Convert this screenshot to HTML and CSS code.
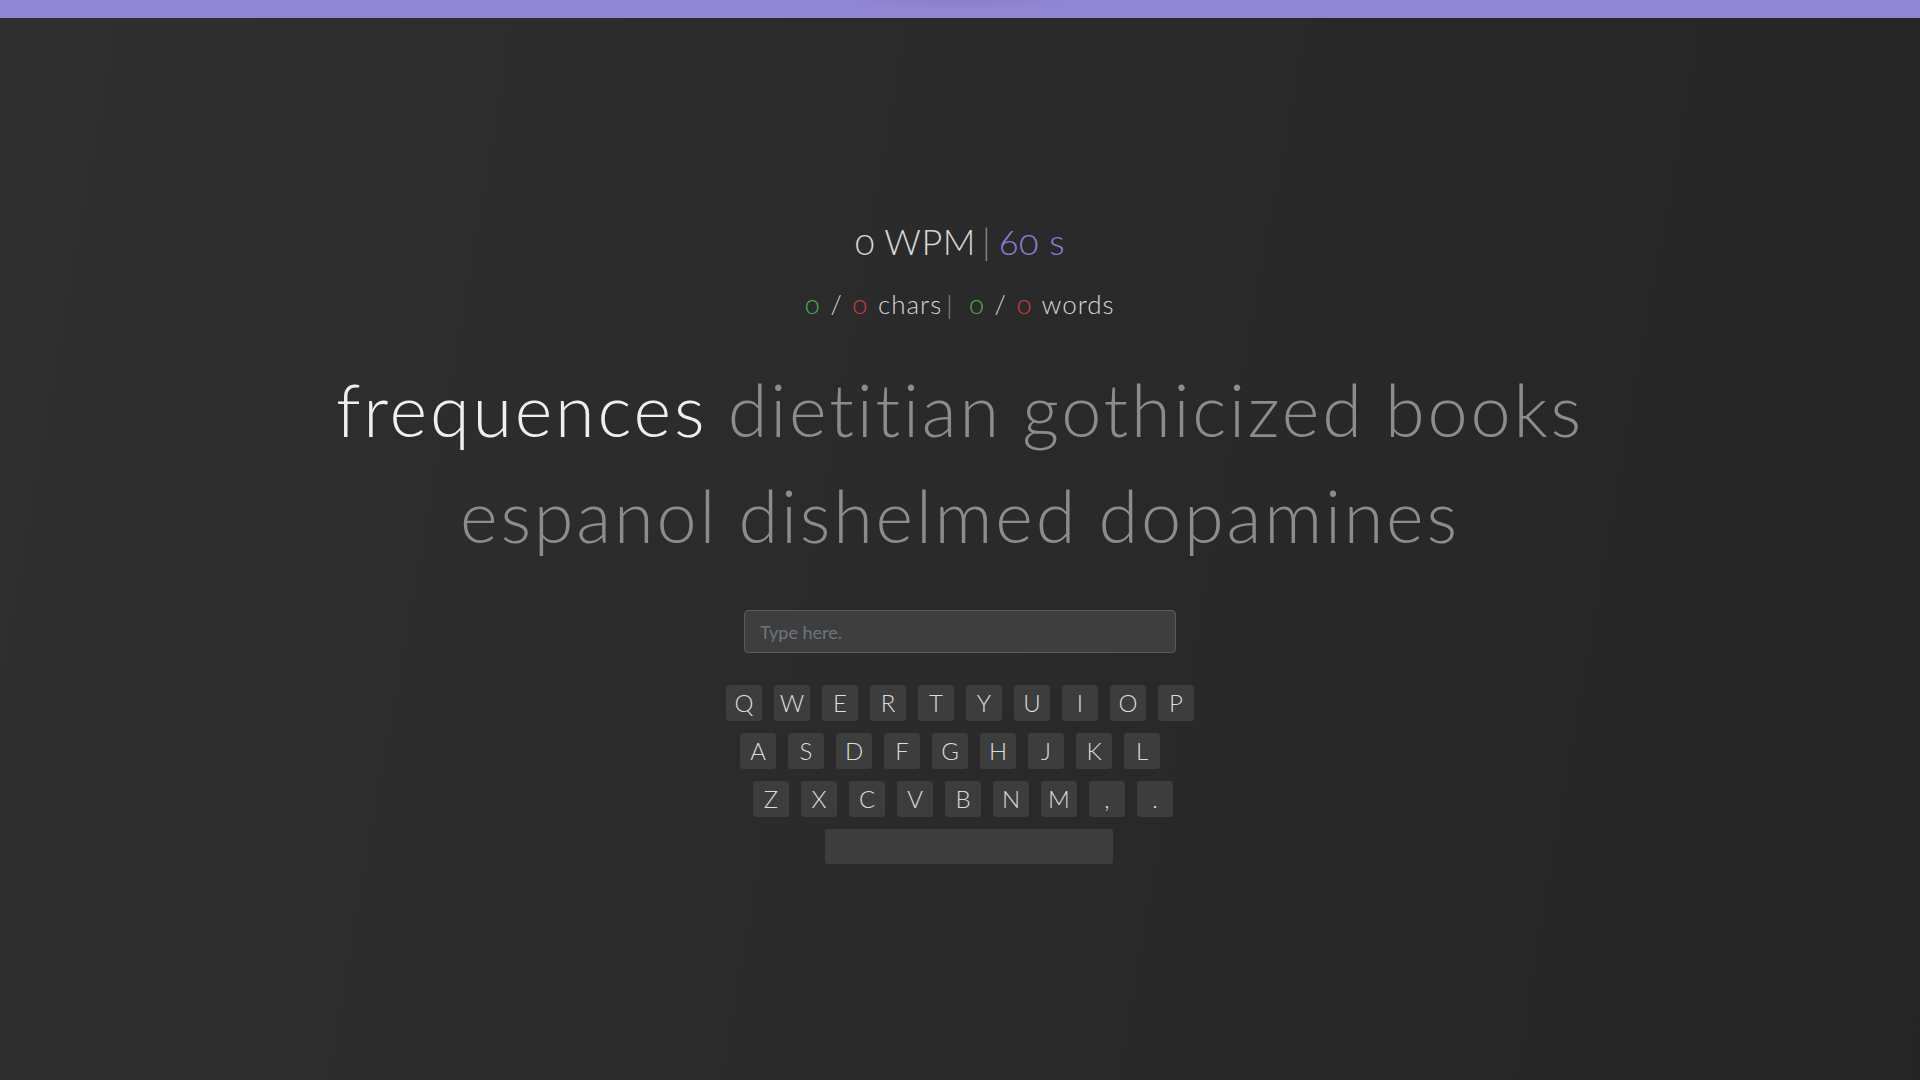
FILE: index.html
```html
<!DOCTYPE html>
<html lang="en">
<head>
<meta charset="utf-8">
<title>Typing Test</title>
<link rel="stylesheet" href="styles.css">
</head>
<body>
<div class="topbar"></div>
<main class="app">
  <div class="speed"><span class="light">0 WPM</span><span class="sep">|</span><span class="time">60 s</span></div>
  <div class="stats">
    <span class="ok">0</span> <span class="light">/</span> <span class="bad">0</span> <span class="light">chars</span><span class="sep small">|</span>
    <span class="ok">0</span> <span class="light">/</span> <span class="bad">0</span> <span class="light">words</span>
  </div>
  <div class="words">
    <div class="line"><span class="current">frequences</span> dietitian gothicized books</div>
    <div class="line">espanol dishelmed dopamines</div>
  </div>
  <input class="typebox" type="text" placeholder="Type here.">
  <div class="keyboard">
    <div class="row">
      <span class="key">Q</span><span class="key">W</span><span class="key">E</span><span class="key">R</span><span class="key">T</span><span class="key">Y</span><span class="key">U</span><span class="key">I</span><span class="key">O</span><span class="key">P</span>
    </div>
    <div class="row row2">
      <span class="key">A</span><span class="key">S</span><span class="key">D</span><span class="key">F</span><span class="key">G</span><span class="key">H</span><span class="key">J</span><span class="key">K</span><span class="key">L</span>
    </div>
    <div class="row row3">
      <span class="key">Z</span><span class="key">X</span><span class="key">C</span><span class="key">V</span><span class="key">B</span><span class="key">N</span><span class="key">M</span><span class="key">,</span><span class="key">.</span>
    </div>
    <div class="row row4">
      <span class="key space"></span>
    </div>
  </div>
</main>
</body>
</html>
```
FILE: styles.css
```css
* { box-sizing: border-box; }
html, body { margin: 0; padding: 0; height: 100%; }
body {
  background: linear-gradient(100deg, #2f2f2f 0%, #2a2a2a 50%, #252525 100%);
  font-family: "Lato", "Open Sans", sans-serif;
  font-weight: 300;
  font-variant-numeric: oldstyle-nums;
  color: #d6d6d6;
  overflow: hidden;
}
.topbar {
  height: 18px;
  background: radial-gradient(ellipse 110px 10px at 50% 0, #8a7ec9 0%, #9186d4 100%);
}
.app {
  display: flex;
  flex-direction: column;
  align-items: center;
  padding-top: 201px;
}
.speed {
  font-size: 36px;
  line-height: 44px;
  letter-spacing: 0.5px;
}
.speed .sep { color: #8a8a8a; margin: 0 8px 0 6px; }
.time { color: #8b80d6; }
.light { color: #d6d6d6; }
.stats {
  margin-top: 25px;
  font-size: 26px;
  line-height: 32px;
  letter-spacing: 1px;
  word-spacing: 2px;
}
.stats .sep { color: #8a8a8a; margin: 0 6px 0 4px; }
.ok { color: #4caf50; }
.bad { color: #d63c3c; }
.words {
  margin-top: 36px;
  text-align: center;
  font-size: 72px;
  line-height: 106px;
  color: #8c8c8c;
  letter-spacing: 2.8px;
  word-spacing: -2px;
}
.current { color: #efefef; }
.typebox {
  margin-top: 42px;
  width: 432px;
  height: 43px;
  background: #3e3e3e;
  border: 1px solid #5a5a5a;
  border-radius: 4px;
  padding: 0 15px;
  font-family: "Lato", sans-serif;
  font-size: 18px;
  color: #ddd;
  outline: none;
}
.typebox::placeholder { color: #6c757d; }
.keyboard {
  margin-top: 32px;
  width: 468px;
  display: flex;
  flex-direction: column;
  gap: 12px;
}
.row { display: flex; gap: 12px; }
.row2 { padding-left: 14px; }
.row3 { padding-left: 27px; }
.row4 { padding-left: 99px; }
.key {
  width: 36px;
  height: 36px;
  padding-bottom: 2px;
  background: #3d3d3d;
  border-radius: 3px;
  display: flex;
  align-items: center;
  justify-content: center;
  font-family: "Lato", sans-serif;
  font-weight: 300;
  font-size: 24px;
  color: #dcdcdc;
}
.key.space { width: 288px; height: 35px; }
```
